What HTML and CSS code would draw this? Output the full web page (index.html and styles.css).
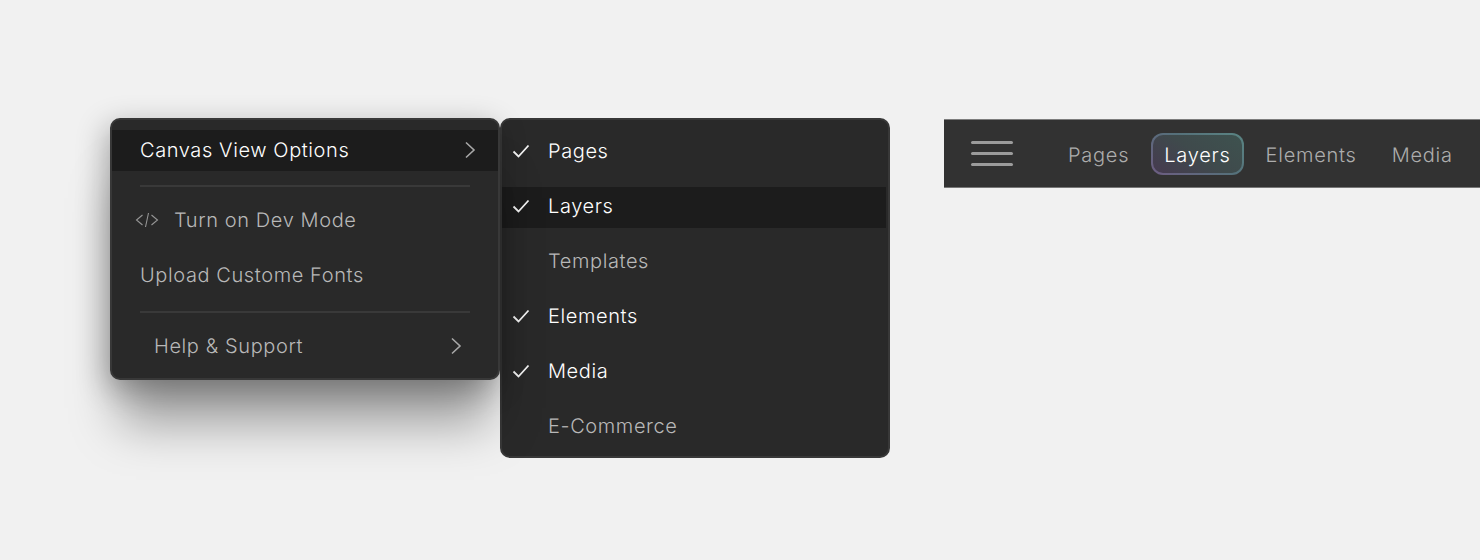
FILE: index.html
```html
<!DOCTYPE html>
<html lang="en">
<head>
<meta charset="utf-8">
<title>Canvas View Options</title>
<link rel="stylesheet" href="styles.css">
</head>
<body>
<main class="stage">
  <section class="menus">
    <div class="menu menu-main">
      <div class="row active">
        <span class="label strong">Canvas View Options</span>
        <svg class="chev" viewBox="0 0 12 18"><path d="M2 1.5 10 9 2 16.5"/></svg>
      </div>
      <hr class="rule">
      <div class="row dev">
        <svg class="code" viewBox="0 0 24 16"><path d="M7.5 3 1.5 8l6 5M16.5 3l6 5-6 5M13.5 1 10.5 15"/></svg>
        <span class="label">Turn on Dev Mode</span>
      </div>
      <div class="row"><span class="label">Upload Custome Fonts</span></div>
      <hr class="rule rule-low">
      <div class="row help">
        <span class="label">Help &amp; Support</span>
        <svg class="chev" viewBox="0 0 12 18"><path d="M2 1.5 10 9 2 16.5"/></svg>
      </div>
    </div>
    <div class="menu menu-sub">
      <div class="row"><svg class="tick" viewBox="0 0 18 14"><path d="M1.5 7.5 6.5 12.5 16.5 1.5"/></svg><span class="label strong">Pages</span></div>
      <div class="row active"><svg class="tick" viewBox="0 0 18 14"><path d="M1.5 7.5 6.5 12.5 16.5 1.5"/></svg><span class="label strong">Layers</span></div>
      <div class="row"><span class="tick"></span><span class="label">Templates</span></div>
      <div class="row"><svg class="tick" viewBox="0 0 18 14"><path d="M1.5 7.5 6.5 12.5 16.5 1.5"/></svg><span class="label strong">Elements</span></div>
      <div class="row"><svg class="tick" viewBox="0 0 18 14"><path d="M1.5 7.5 6.5 12.5 16.5 1.5"/></svg><span class="label strong">Media</span></div>
      <div class="row"><span class="tick"></span><span class="label">E-Commerce</span></div>
    </div>
  </section>
  <nav class="bar">
    <div class="burger"><span></span><span></span><span></span></div>
    <div class="tabs">
      <span class="tab">Pages</span>
      <span class="tab current">Layers</span>
      <span class="tab">Elements</span>
      <span class="tab">Media</span>
    </div>
  </nav>
</main>
</body>
</html>
```
FILE: styles.css
```css
* { box-sizing: border-box; }
html, body { margin: 0; height: 100%; overflow: hidden; }
body {
  background: #f1f1f1;
  font-family: Inter, "Liberation Sans", sans-serif;
  font-size: 20px;
  font-weight: 350;
  color: #b8b8b8;
  text-rendering: geometricPrecision;
}
.stage {
  display: flex;
  align-items: flex-start;
  gap: 54px;
  padding: 118px 0 0 110px;
  width: 1480px;
  height: 560px;
}
.menus { display: flex; align-items: flex-start; flex: none; }
.menu {
  width: 390px;
  background: #292929;
  border: 2px solid #383838;
  border-radius: 10px;
  display: flex;
  flex-direction: column;
}
.menu-main {
  padding: 10px 0 11px;
  position: relative;
  box-shadow: 0 54px 46px -10px rgba(0,0,0,.34), -4px 8px 30px rgba(0,0,0,.3);
}
.menu-sub { padding: 12px 2px 8px 0; gap: 14px; }
.row {
  height: 41px;
  display: flex;
  align-items: center;
  padding-left: 28px;
  padding-bottom: 1px;
}
.menu-sub .row { padding-left: 10px; padding-bottom: 3px; }
.row.active { background: #1c1c1c; }
.label { line-height: 24px; letter-spacing: 0.6px; white-space: nowrap; }
.strong { color: #ffffff; }
.chev {
  width: 12px; height: 18px;
  margin-left: auto; margin-right: 22px;
  fill: none; stroke: #a8a8a8; stroke-width: 1.6;
}
.help { padding-left: 42px; }
.help .chev { margin-right: 36px; }
.rule {
  margin: 14px 28px 13px;
  border: 0;
  height: 2px;
  width: 330px;
  background: #393939;
}
.rule-low { margin-top: 15px; }
.row + .row { margin-top: 14px; }
.menu-sub .row + .row { margin-top: 0; }
.dev { padding-left: 23px; gap: 15px; }
.code {
  width: 24px; height: 16px;
  fill: none; stroke: #969696; stroke-width: 1.1;
}
.tick {
  width: 18px; height: 14px;
  margin-right: 18px;
  flex: none;
  fill: none; stroke: #f4f4f4; stroke-width: 1.8;
}
.bar {
  flex: 1;
  margin-top: 1px;
  height: 69px;
  background: #323232;
  border-top: 1px solid #7d7d7d;
  border-bottom: 1px solid #777;
  display: flex;
  align-items: center;
  padding-left: 27px;
  min-width: 0;
}
.burger {
  width: 42px;
  display: flex;
  flex-direction: column;
  gap: 8px;
  margin-right: 42px;
}
.burger span { height: 3px; border-radius: 2px; background: #9c9c9c; }
.tabs { display: flex; align-items: center; gap: 9px; }
.tab {
  padding: 2px 11px 0;
  height: 42px;
  display: flex;
  align-items: center;
  border-radius: 12px;
  border: 2px solid transparent;
  color: #adadad;
  letter-spacing: 0.75px;
  white-space: nowrap;
}
.tab.current {
  color: #ffffff;
  background:
    linear-gradient(35deg, #463a50 0%, #3f4a4c 50%, #3e524f 100%) padding-box,
    linear-gradient(35deg, #6d5c82 0%, #55707a 55%, #5a8583 100%) border-box;
}
```
